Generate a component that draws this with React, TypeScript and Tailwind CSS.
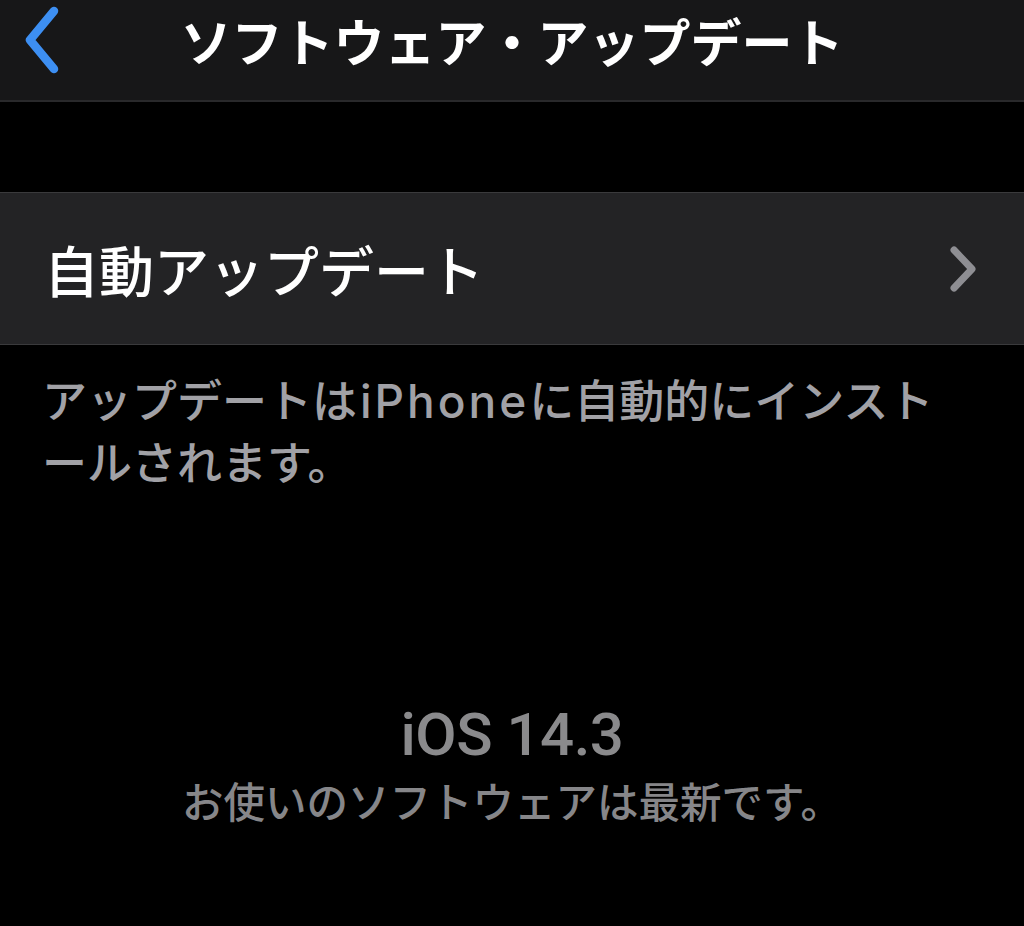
import React from "react";

const JP = '"Noto Sans CJK JP", "Noto Sans", sans-serif';
const LATIN = 'Inter, "Noto Sans CJK JP", sans-serif';

function BackChevron() {
  return (
    <svg width="44" height="70" viewBox="0 0 44 70" fill="none">
      <path
        d="M34 6 L10 35 L34 64"
        stroke="#3d8ff2"
        strokeWidth="8.5"
        strokeLinecap="round"
        strokeLinejoin="round"
      />
    </svg>
  );
}

function RowChevron() {
  return (
    <svg width="32" height="48" viewBox="0 0 32 48" fill="none">
      <path
        d="M6 5 L24 24 L6 43"
        stroke="#8e8e93"
        strokeWidth="7"
        strokeLinecap="round"
        strokeLinejoin="round"
      />
    </svg>
  );
}

export default function App() {
  return (
    <div className="w-[1024px] h-[926px] bg-black overflow-hidden flex flex-col">
      {/* navigation bar */}
      <div className="h-[102px] bg-[#171718] border-b-2 border-[#29292b] shrink-0">
        <div className="h-[80px] grid grid-cols-[1fr_auto_1fr] items-center">
          <div className="pl-[20px] flex items-center">
            <BackChevron />
          </div>
          <div
            className="text-white font-bold text-[51px] leading-none"
            style={{ fontFamily: JP }}
          >
            ソフトウェア・アップデート
          </div>
          <div />
        </div>
      </div>

      <div className="h-[90px] shrink-0" />

      {/* settings row */}
      <div className="h-[153px] shrink-0 bg-[#232325] border-y border-[#3a3a3c] flex items-center justify-between pl-[44px] pr-[44px]">
        <span
          className="text-white text-[55px] font-medium leading-none"
          style={{ fontFamily: JP }}
        >
          自動アップデート
        </span>
        <RowChevron />
      </div>

      {/* footer note */}
      <div
        className="pl-[42px] pr-[60px] pt-[24px] flex flex-col text-[#a1a1a6] text-[45px] leading-[60px] font-medium"
        style={{ fontFamily: JP }}
      >
        <div className="flex items-baseline whitespace-nowrap">
          <span>アップデートは</span>
          <span
            className="text-[46px] tracking-[3px] ml-[3px]"
            style={{ fontFamily: LATIN }}
          >
            iPhone
          </span>
          <span>に自動的にインスト</span>
        </div>
        <div>ールされます。</div>
      </div>

      {/* version status */}
      <div className="mt-[212px] flex flex-col items-center">
        <div
          className="text-[#8a8a8c] text-[60px] leading-[64px] font-medium tracking-[-0.5px]"
          style={{ fontFamily: 'Roboto, "Liberation Sans", sans-serif' }}
        >
          iOS 14.3
        </div>
        <div
          className="mt-[8px] text-[#868689] text-[41.5px] leading-[50px] font-medium"
          style={{ fontFamily: JP }}
        >
          お使いのソフトウェアは最新です。
        </div>
      </div>
    </div>
  );
}
